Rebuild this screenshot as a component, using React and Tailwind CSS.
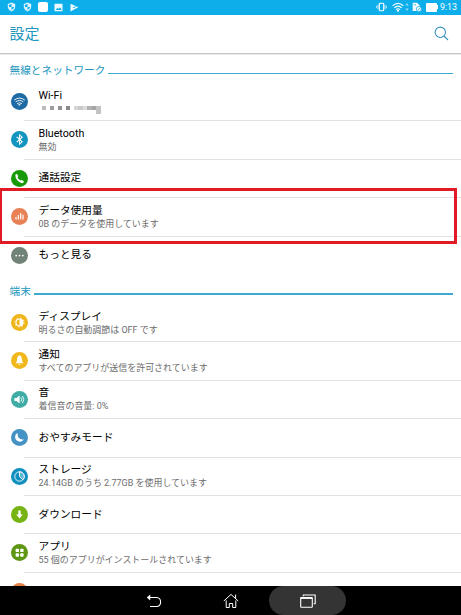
import React from "react";

const disc = (fill, children) => (
  <svg viewBox="0 0 17 17" className="block size-[17px]" fill="none">
    <circle cx="8.5" cy="8.5" r="8.5" fill={fill} />
    {children}
  </svg>
);

const icons = {
  wifi: disc(
    "#1e6aa5",
    <g stroke="#fff" strokeWidth="0.9" strokeLinecap="round">
      <path d="M3.5 6.9Q8.5 2.9 13.5 6.9" />
      <path d="M5 8.7Q8.5 5.9 12 8.7" />
      <path d="M6.5 10.4Q8.5 8.9 10.5 10.4" />
      <path d="M7.7 11.5h1.6L8.5 12.4Z" fill="#fff" strokeWidth="0.5" />
    </g>
  ),
  bluetooth: disc(
    "#1295bf",
    <path d="M5.7 5.9L11.2 10.8L8.5 13.2V3.8L11.2 6.2L5.7 11.1" stroke="#fff" strokeWidth="1.05" />
  ),
  phone: disc(
    "#189a08",
    <path d="M4.3 4.7L5.8 3.8L7.3 6.3L6.5 7.3Q7.4 9.4 9.5 10.6L10.6 9.8L13 11.4L12 13.1Q9.5 13.5 6.7 10.7Q4 8 4.3 4.7Z" fill="#fff" />
  ),
  data: disc(
    "#e88256",
    <path d="M5 11.5V9.1M7.3 11.5V7M9.7 11.5V5M12 11.5V6.7" stroke="#fff" strokeWidth="1.2" />
  ),
  more: disc(
    "#718278",
    <g fill="#fff"><circle cx="5.2" cy="8.6" r="0.9" /><circle cx="8.5" cy="8.6" r="0.9" /><circle cx="11.8" cy="8.6" r="0.9" /></g>
  ),
  display: disc(
    "#efb61b",
    <g>
      <circle cx="8.5" cy="8.5" r="3.5" stroke="#fff" strokeWidth="1.1" />
      <path d="M8.5 5a3.5 3.5 0 0 1 0 7Z" fill="#fff" />
      <circle cx="8.5" cy="8.5" r="4.6" stroke="#fff" strokeWidth="0.9" strokeDasharray="1.4 2.213" />
    </g>
  ),
  bell: disc(
    "#f0b81c",
    <g fill="#fff"><path d="M8.5 3.3C6.3 4.1 6.2 6.5 6 8.2Q5.8 9.7 4.6 11.2H12.4Q11.2 9.7 11 8.2C10.8 6.5 10.7 4.1 8.5 3.3Z" /><path d="M7.3 11.9H9.7Q8.5 13.6 7.3 11.9Z" /></g>
  ),
  sound: disc(
    "#3fada5",
    <g>
      <path d="M3.4 6.9H5.5L8.6 4.4V12.6L5.5 10.1H3.4Z" fill="#fff" />
      <path d="M10 6.6Q11.3 8.5 10 10.4M11.5 5Q14 8.5 11.5 12" stroke="#fff" strokeWidth="0.9" />
    </g>
  ),
  moon: disc(
    "#4592c4",
    <path d="M6.8 4C3.8 5.3 3.3 9 5.5 11.3C7.7 13.5 11.5 13.1 12.8 10.2C9.8 11.2 5.8 8.5 6.8 4Z" fill="#fff" />
  ),
  storage: disc(
    "#118fbe",
    <g>
      <circle cx="8.5" cy="8.5" r="4.7" stroke="#fff" strokeWidth="0.9" />
      <path d="M8.5 8.5V3.8A4.7 4.7 0 0 1 11.9 11.8Z" fill="#5eb6d6" stroke="#fff" strokeWidth="0.9" />
    </g>
  ),
  download: disc(
    "#76b313",
    <path d="M7.3 4.5H9.7V8.5H11.8L8.5 12.4L5.2 8.5H7.3Z" fill="#fff" />
  ),
  apps: disc(
    "#5d9713",
    <g fill="#fff">
      <rect x="4.6" y="4.7" width="3.4" height="3.4" rx="0.9" />
      <rect x="9.2" y="4.7" width="3.4" height="3.4" rx="0.9" />
      <rect x="4.6" y="9.3" width="3.4" height="3.4" rx="0.9" />
      <rect x="9.2" y="9.3" width="3.4" height="3.4" rx="0.9" />
    </g>
  ),
  orange: disc("#e08248", null),
};

// Shades of the pixelated network name, left to right.
const MASK = ["#bcbcbc", "#ffffff", "#9d9d9d", "#ffffff", "#929292", "#ffffff", "#888888", "#ffffff", "#d4d4d4", "#c9c9c9", "#dcdcdc", "#b2b2b2", "#a5a5a5", "#c4c4c4"];

function Mask() {
  return (
    <div className="flex h-3 items-start pt-[3.5px] pl-[3px]">
      {MASK.map((c, i) => (
        <span key={i} className="block h-1 w-1 last:h-2 nth-[n+9]:w-[4.6px]" style={{ backgroundColor: c }} />
      ))}
    </div>
  );
}

function Row({ icon, title, sub, masked, last }) {
  return (
    <div className="flex h-[38.4px] shrink-0 pl-[10.5px]">
      <div className="flex w-[13.5px] shrink-0 items-center pb-[1.4px]">
        <div className="relative z-10 shrink-0">{icons[icon]}</div>
      </div>
      <div className={`flex flex-1 flex-col justify-center border-b pl-[14.5px] ${last ? "border-transparent" : "border-[#e2e2e2]"}`}>
        <div className="h-[14px] text-[10.7px] leading-[14px] whitespace-nowrap text-black">{title}</div>
        {sub && <div className="h-3 text-[8.97px] leading-3 whitespace-nowrap text-[#6c6c6c]">{sub}</div>}
        {masked && <Mask />}
      </div>
    </div>
  );
}

function Section({ title }) {
  return (
    <div className="flex h-[29px] shrink-0 items-end pb-[5px] pl-[9.5px]">
      <div className="text-[10.67px] leading-[14px] whitespace-nowrap text-[#2196bd]">{title}</div>
      <div className="mb-[4px] ml-[3px] h-[1.5px] flex-1 bg-[#3da9cd]" />
      <div className="w-2" />
    </div>
  );
}

function Shield() {
  return (
    <svg viewBox="0 0 9 10" className="h-[10px] w-[9px]" fill="none">
      <path d="M4.5 0.6L8.2 1.9V4.8Q8 8 4.5 9.4Q1 8 0.8 4.8V1.9Z" fill="#fff" fillOpacity=".85" />
      <path d="M4.5 2V5H2Q1.9 3.5 2 2.8ZM4.5 5H7Q6.7 7.2 4.5 8.1Z" fill="#11aeea" />
    </svg>
  );
}

function StatusBar() {
  return (
    <div className="flex h-[14.5px] shrink-0 items-center bg-[#0eaeea] pr-[4px] pl-[7px] text-white">
      <Shield />
      <div className="w-[6.5px]" />
      <Shield />
      <div className="ml-[6px] size-[10px] rounded-[2px] bg-white" />
      <svg viewBox="0 0 9 9" className="ml-[6px] size-[9px]">
        <rect x="0.5" y="0.8" width="8" height="7.4" rx="0.6" fill="#eefaff" />
        <path d="M1.7 7L3.5 4.8L4.6 6L6 4.2L7.7 7Z" fill="#11aeea" />
      </svg>
      <svg viewBox="0 0 9 9" className="ml-[7px] size-[9px]">
        <path d="M0.5 0.8L8.3 4.2L0.5 8.5Z" fill="#eefaff" />
        <path d="M2.8 3.8L4 5L7.2 1.6" fill="none" stroke="#11aeea" strokeWidth="0.8" />
      </svg>
      <div className="flex-1" />
      <svg viewBox="0 0 11 10" className="h-[10px] w-[11px]" fill="none" stroke="#fff">
        <rect x="3.3" y="1.3" width="4.4" height="7.4" rx="0.6" strokeWidth="1.1" />
        <path d="M2 2.8V7.2M9 2.8V7.2M0.6 3.8V6.2M10.4 3.8V6.2" strokeWidth="0.7" />
      </svg>
      <svg viewBox="0 0 12 10" className="ml-[5px] h-[10px] w-3" fill="none" stroke="#fff" strokeWidth="1.1">
        <path d="M0.6 3.8Q6 -1.2 11.4 3.8M2.3 5.8Q6 2.4 9.7 5.8M4 7.7Q6 5.8 8 7.7" />
        <circle cx="6" cy="8.8" r="0.5" fill="#fff" />
      </svg>
      <svg viewBox="0 0 4 10" className="ml-[1px] h-[10px] w-1" fill="#8edcf7">
        <path d="M0.3 3.5L2 1L3.7 3.5ZM0.3 6.5L2 9L3.7 6.5Z" />
      </svg>
      <svg viewBox="0 0 10 10" className="ml-[3px] size-[10px]">
        <path d="M0.7 0.8H5L7.5 3.2V9H0.7Z" fill="#f4fbff" />
        <path d="M2 2v1.5M3.5 2v1.5" stroke="#11aeea" strokeWidth="0.6" />
        <circle cx="6.9" cy="7" r="2.6" fill="#f4fbff" stroke="#11aeea" strokeWidth="0.7" />
        <path d="M5.7 8.2L8.1 5.8" stroke="#11aeea" strokeWidth="0.8" />
      </svg>
      <div className="ml-[4px] h-[9px] w-[11px] rounded-[1px] bg-white" />
      <div className="h-1 w-[1px] bg-white" />
      <div className="ml-[2px] text-[8.8px] leading-[14px]">9:13</div>
    </div>
  );
}

function NavBar() {
  return (
    <div className="flex h-[29px] shrink-0 items-center justify-center bg-black">
      <div className="flex w-[77px] justify-center">
        <svg viewBox="0 0 16 14" className="h-[14px] w-4" fill="none" stroke="#fff" strokeWidth="1.1">
          <path d="M2.3 3.5H10.5Q14.6 3.8 14.6 8Q14.6 12.4 10.5 12.5H4" />
          <path d="M1 3.5L4 1V6Z" fill="#fff" strokeWidth="0.5" />
        </svg>
      </div>
      <div className="flex w-[77px] justify-center">
        <svg viewBox="0 0 16 16" className="size-4" fill="none" stroke="#fff" strokeWidth="1">
          <path d="M0.8 8L8 1.4L15.2 8" />
          <path d="M12.6 5.4V1.5" />
          <path d="M3.2 7.4V14.5H6.3V10.5H9.7V14.5H12.8V7.4" />
        </svg>
      </div>
      <div className="flex h-[29px] w-[77px] items-center justify-center rounded-full bg-[#343434]">
        <svg viewBox="0 0 16 14" className="h-[14px] w-4" fill="none" stroke="#fff" strokeWidth="1.1">
          <rect x="0.7" y="3.6" width="11.6" height="9.6" rx="0.5" />
          <path d="M0.7 4.2h11.6" strokeWidth="1.4" />
          <path d="M3.3 2.3V1H15.2V9.7H13.7" />
        </svg>
      </div>
    </div>
  );
}

export default function App() {
  return (
    <div className="relative flex h-[615px] w-[461px] flex-col overflow-hidden bg-white font-['Roboto','Noto_Sans_CJK_JP',sans-serif]">
      <StatusBar />
      <header className="flex h-[39.5px] shrink-0 items-center justify-between border-b border-[#c5c5c5] pr-[12px] pl-[9.5px] shadow-[0_1px_0_#ececec]">
        <h1 className="text-[15px] leading-5 text-[#2196bd]">設定</h1>
        <svg viewBox="0 0 15 15" className="mb-[1px] size-[15px]" fill="none" stroke="#3b93c5" strokeWidth="1.1">
          <circle cx="6.3" cy="6.3" r="5.2" />
          <path d="M10 10L14 14" />
        </svg>
      </header>
      <main className="flex min-h-0 flex-1 flex-col overflow-hidden">
        <Section title="無線とネットワーク" />
        <Row icon="wifi" title="Wi-Fi" masked />
        <Row icon="bluetooth" title="Bluetooth" sub="無効" />
        <Row icon="phone" title="通話設定" />
        <Row icon="data" title="データ使用量" sub="0B のデータを使用しています" />
        <Row icon="more" title="もっと見る" last />
        <Section title="端末" />
        <Row icon="display" title="ディスプレイ" sub="明るさの自動調節は OFF です" />
        <Row icon="bell" title="通知" sub="すべてのアプリが送信を許可されています" />
        <Row icon="sound" title="音" sub="着信音の音量: 0%" />
        <Row icon="moon" title="おやすみモード" />
        <Row icon="storage" title="ストレージ" sub="24.14GB のうち 2.77GB を使用しています" />
        <Row icon="download" title="ダウンロード" />
        <Row icon="apps" title="アプリ" sub="55 個のアプリがインストールされています" />
        <Row icon="orange" title="" last />
      </main>
      <NavBar />
      <div className="absolute top-[188px] left-[-1px] z-20 h-[56px] w-[458px] border-[3px] border-[#e01b24]" />
    </div>
  );
}
